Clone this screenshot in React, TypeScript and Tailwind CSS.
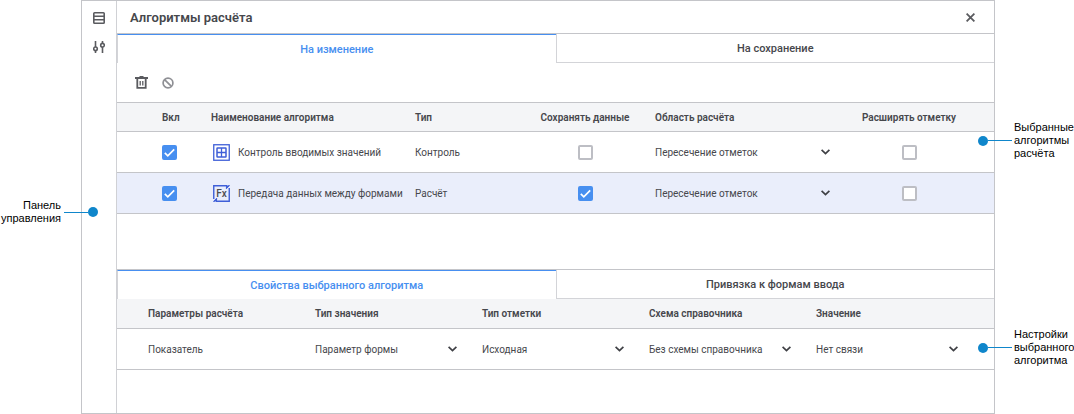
import { ReactNode, useState } from "react";

interface Algorithm {
  id: string;
  name: string;
  type: string;
  icon: ReactNode;
  enabled: boolean;
  save: boolean;
  extend: boolean;
}

const areaOptions = ["Пересечение отметок"];

const parameterFields = [
  { label: "Тип значения", options: ["Параметр формы"] },
  { label: "Тип отметки", options: ["Исходная"] },
  { label: "Схема справочника", options: ["Без схемы справочника"] },
  { label: "Значение", options: ["Нет связи"] }
];

function ListIcon() {
  return (
    <svg width="12" height="12" viewBox="0 0 12 12" fill="none" stroke="#5a5b5f" strokeWidth="1.6">
      <rect x=".8" y=".8" width="10.4" height="10.4" rx=".8" />
      <path d="M1 4.3h10M1 7.7h10" />
    </svg>
  );
}

function SlidersIcon() {
  return (
    <svg width="12" height="12" viewBox="0 0 12 12" fill="none" stroke="#5a5b5f" strokeWidth="1.6">
      <path d="M2.5 0v6M2.5 9.5V12M9.5 6v6M9.5 0v2.5" />
      <circle cx="2.5" cy="7.8" r="1.8" />
      <circle cx="9.5" cy="4.2" r="1.8" />
    </svg>
  );
}

function TrashIcon() {
  return (
    <svg width="13" height="13" viewBox="0 0 13 13" fill="none" stroke="#5a5b5f" strokeWidth="1.8">
      <path d="M0 2h13M4.5.9h4" />
      <path d="M2.3 2.5v9.4h8.4V2.5" />
      <path d="M5.2 5v4.6M7.8 5v4.6" strokeWidth="1.3" />
    </svg>
  );
}

function BanIcon() {
  return (
    <svg width="12" height="12" viewBox="0 0 12 12" fill="none" stroke="#8f9095" strokeWidth="1.7">
      <circle cx="6" cy="6" r="4.9" />
      <path d="M2.6 2.6l6.8 6.8" />
    </svg>
  );
}

function CloseIcon() {
  return (
    <svg width="9" height="9" viewBox="0 0 9 9" fill="none" stroke="#5a5b5f" strokeWidth="1.8">
      <path d="M.6.6l7.8 7.8M8.4.6L.6 8.4" />
    </svg>
  );
}

function GridIcon() {
  return (
    <svg className="shrink-0" width="17" height="17" viewBox="0 0 17 17" fill="none" stroke="#3f5fd8">
      <rect x=".75" y=".75" width="15.5" height="15.5" strokeWidth="1.3" />
      <rect x="4" y="4" width="9" height="9" rx=".5" strokeWidth="1.5" />
      <path d="M8.5 4v9M4 8.5h9" strokeWidth="1.3" />
    </svg>
  );
}

function FormulaIcon() {
  return (
    <svg className="shrink-0" width="17" height="17" viewBox="0 0 17 17" fill="none" stroke="#3f5fd8" strokeWidth="1.4">
      <path d="M.75 14V.75H14.5M16.25 3v13.25H2.5" />
      <path d="M13 3.5L16.5 0M.5 17L4 13.5" strokeWidth="1.2" />
      <path d="M13 1h3.2L13 4zM4 16H.8L4 13z" fill="#3f5fd8" stroke="none" />
      <text x="8.5" y="12" textAnchor="middle" fill="#4b4d52" stroke="none" className="font-['Roboto',sans-serif] text-[10px] font-medium">
        Fx
      </text>
    </svg>
  );
}

function Checkbox({ label, checked, onChange }: { label: string; checked: boolean; onChange: () => void }) {
  return (
    <span className="relative inline-flex align-middle">
      <input
        type="checkbox"
        aria-label={label}
        checked={checked}
        onChange={onChange}
        className="size-[15px] appearance-none rounded-[2px] border-2 border-[#bdbec4] bg-white checked:border-[#478ff0] checked:bg-[#478ff0]"
      />
      {checked && (
        <svg className="pointer-events-none absolute inset-0" width="15" height="15" viewBox="0 0 15 15" fill="none" stroke="#fff" strokeWidth="1.7">
          <path d="M2.8 7.8l3 3L12.2 4.4" />
        </svg>
      )}
    </span>
  );
}

function Select({ label, options }: { label: string; options: string[] }) {
  return (
    <span className="relative flex items-center">
      <select aria-label={label} className="w-full appearance-none bg-transparent pr-4 outline-none">
        {options.map((option) => (
          <option key={option}>{option}</option>
        ))}
      </select>
      <svg className="pointer-events-none absolute right-0" width="9" height="6" viewBox="0 0 9 6" fill="none" stroke="#3f4045" strokeWidth="1.7">
        <path d="M.6.8l3.9 3.8L8.4.8" />
      </svg>
    </span>
  );
}

function Tabs({ items }: { items: string[] }) {
  const [active, setActive] = useState(0);

  return (
    <div role="tablist" className="flex h-[29px] text-[11px] font-medium">
      {items.map((item, i) => (
        <button
          key={item}
          role="tab"
          aria-selected={i === active}
          onClick={() => setActive(i)}
          className={`flex-1 border-l border-l-[#d3d4d8] pt-[2px] ${
            i === active ? "border-t border-t-[#478ff0] text-[#478ff0]" : "border-b border-b-[#d3d4d8]"
          }`}
        >
          {item}
        </button>
      ))}
    </div>
  );
}

function Callout({ lines, side }: { lines: string[]; side: "left" | "right" }) {
  return (
    <div className={`relative text-[11px] leading-[13px] text-black ${side === "left" ? "pr-5 text-right" : "pl-[19px]"}`}>
      {lines.map((line) => (
        <p key={line} className="whitespace-nowrap">
          {line}
        </p>
      ))}
      <span className={`absolute inset-y-0 flex items-center ${side === "left" ? "-right-[17px] flex-row-reverse" : "-left-[17px]"}`}>
        <i className="size-[10px] rounded-full bg-[#0f86cb]" />
        <i className="h-px w-6 bg-[#0f86cb]" />
      </span>
    </div>
  );
}

export default function App() {
  const [algorithms, setAlgorithms] = useState<Algorithm[]>([
    { id: "control", name: "Контроль вводимых значений", type: "Контроль", icon: <GridIcon />, enabled: true, save: false, extend: false },
    { id: "transfer", name: "Передача данных между формами", type: "Расчёт", icon: <FormulaIcon />, enabled: true, save: true, extend: false }
  ]);
  const [selected, setSelected] = useState("transfer");

  const toggle = (id: string, key: "enabled" | "save" | "extend") =>
    setAlgorithms((list) => list.map((a) => (a.id === id ? { ...a, [key]: !a[key] } : a)));

  return (
    <div className="flex min-h-screen bg-white font-['Liberation_Sans',sans-serif]">
      <aside className="w-[81px] shrink-0 pt-[199px]">
        <Callout side="left" lines={["Панель", "управления"]} />
      </aside>

      <div className="flex min-w-0 flex-1 border border-[#c4c5c9] font-['Roboto',sans-serif] text-[10px] text-[#46474c]">
        <nav className="flex w-[35px] shrink-0 flex-col items-center gap-[17px] border-r border-[#d0d1d5] pt-[11px]">
          <button aria-label="Список">
            <ListIcon />
          </button>
          <button aria-label="Параметры">
            <SlidersIcon />
          </button>
        </nav>

        <main className="min-w-0 flex-1">
          <header className="flex h-[33px] items-center justify-between border-b border-[#c4c5c9] pl-[13px] pr-[19px] pt-px">
            <h1 className="text-[13px] font-semibold">Алгоритмы расчёта</h1>
            <button aria-label="Закрыть">
              <CloseIcon />
            </button>
          </header>

          <Tabs items={["На изменение", "На сохранение"]} />

          <div className="flex h-10 items-center gap-[14px] border-b border-[#c4c5c9] pl-[18px]">
            <button aria-label="Удалить">
              <TrashIcon />
            </button>
            <button aria-label="Отключить">
              <BanIcon />
            </button>
          </div>

          <table className="w-full table-fixed border-separate border-spacing-0 text-left">
            <colgroup>
              <col className="w-[84px]" />
              <col className="w-[204px]" />
              <col className="w-[120px]" />
              <col className="w-[120px]" />
              <col className="w-[195px]" />
              <col className="w-[154px]" />
            </colgroup>
            <thead className="bg-[#f4f5f7]">
              <tr className="h-[29px] *:border-b *:border-[#c4c5c9] *:font-semibold">
                <th className="pl-[45px]">Вкл</th>
                <th className="pl-[10px]">Наименование алгоритма</th>
                <th className="pl-[10px]">Тип</th>
                <th className="text-center">Сохранять данные</th>
                <th className="pl-[10px]">Область расчёта</th>
                <th className="pr-4 text-center">Расширять отметку</th>
              </tr>
            </thead>
            <tbody>
              {algorithms.map((a) => (
                <tr
                  key={a.id}
                  onClick={() => setSelected(a.id)}
                  className={`h-[41px] *:border-b *:border-[#c4c5c9] ${a.id === selected ? "bg-[#eaeefb]" : ""}`}
                >
                  <td className="pl-[45px]">
                    <Checkbox label="Вкл" checked={a.enabled} onChange={() => toggle(a.id, "enabled")} />
                  </td>
                  <td className="pl-[12px]">
                    <span className="flex items-center gap-2 whitespace-nowrap">
                      {a.icon}
                      {a.name}
                    </span>
                  </td>
                  <td className="pl-[10px]">{a.type}</td>
                  <td className="text-center">
                    <Checkbox label="Сохранять данные" checked={a.save} onChange={() => toggle(a.id, "save")} />
                  </td>
                  <td className="px-[10px]">
                    <Select label="Область расчёта" options={areaOptions} />
                  </td>
                  <td className="pr-4 text-center">
                    <Checkbox label="Расширять отметку" checked={a.extend} onChange={() => toggle(a.id, "extend")} />
                  </td>
                </tr>
              ))}
            </tbody>
          </table>

          <section className="mt-[55px] border-t border-[#c4c5c9]">
            <Tabs items={["Свойства выбранного алгоритма", "Привязка к формам ввода"]} />
            <table className="w-full table-fixed border-separate border-spacing-0 text-left">
              <colgroup>
                <col className="w-[188px]" />
                <col className="w-[167px]" />
                <col className="w-[167px]" />
                <col className="w-[167px]" />
                <col className="w-[188px]" />
              </colgroup>
              <thead className="bg-[#f4f5f7]">
                <tr className="h-[30px] *:border-b *:border-[#c4c5c9] *:font-semibold">
                  <th className="pl-[31px]">Параметры расчёта</th>
                  {parameterFields.map((f) => (
                    <th key={f.label} className="pl-[10px]">
                      {f.label}
                    </th>
                  ))}
                </tr>
              </thead>
              <tbody>
                <tr className="h-[41px] *:border-b *:border-[#c4c5c9]">
                  <td className="pl-[31px]">Показатель</td>
                  {parameterFields.map((f) => (
                    <td key={f.label} className="pl-[10px] pr-[15px] last:pr-9">
                      <Select label={f.label} options={f.options} />
                    </td>
                  ))}
                </tr>
              </tbody>
            </table>
          </section>
        </main>
      </div>

      <aside className="flex w-[79px] shrink-0 flex-col gap-[168px] pt-[121px]">
        <Callout side="right" lines={["Выбранные", "алгоритмы", "расчёта"]} />
        <Callout side="right" lines={["Настройки", "выбранного", "алгоритма"]} />
      </aside>
    </div>
  );
}
